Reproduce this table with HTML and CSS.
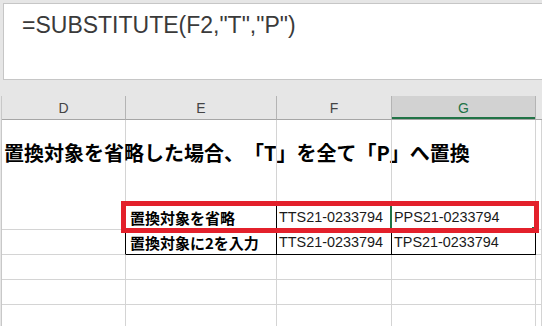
FILE: index.html
```html
<!DOCTYPE html>
<html lang="ja">
<head>
    <meta charset="UTF-8">
    <title>SUBSTITUTE</title>
    <link rel="stylesheet" href="styles.css">
</head>
<body>

    <div class="formula-bar">=SUBSTITUTE(F2,"T","P")</div>

    <div class="sheet">
        <div class="col-head">D</div>
        <div class="col-head">E</div>
        <div class="col-head">F</div>
        <div class="col-head active">G</div>
        <div class="col-head last"></div>

        <div class="cell title-row"><span class="title">置換対象を省略した場合、「T」を全て「P」へ置換</span></div>
        <div class="cell title-row"></div>
        <div class="cell title-row tb-top"></div>
        <div class="cell title-row tb-top"></div>
        <div class="cell title-row"></div>

        <div class="cell tb-left"></div>
        <div class="cell tb label">置換対象を省略</div>
        <div class="cell tb value">TTS21-0233794</div>
        <div class="cell tb value">PPS21-0233794</div>
        <div class="cell"></div>

        <div class="cell tb-left"></div>
        <div class="cell tb label">置換対象に2を入力</div>
        <div class="cell tb value">TTS21-0233794</div>
        <div class="cell tb value">TPS21-0233794</div>
        <div class="cell"></div>

        <div class="cell"></div>
        <div class="cell"></div>
        <div class="cell"></div>
        <div class="cell"></div>
        <div class="cell"></div>

        <div class="cell"></div>
        <div class="cell"></div>
        <div class="cell"></div>
        <div class="cell"></div>
        <div class="cell"></div>

        <div class="cell"></div>
        <div class="cell"></div>
        <div class="cell"></div>
        <div class="cell"></div>
        <div class="cell"></div>

        <!-- active cell G3 and the highlight frame -->
        <div class="selection"><span class="handle"></span></div>
        <div class="highlight"></div>
    </div>

</body>
</html>
```

FILE: styles.css
```css
body {
    margin: 0;
    background-color: #e6e6e6;
    font-family: "Liberation Sans", Arial, sans-serif;
    overflow: hidden;
}

.formula-bar {
    margin: 3px 0 0 3px;
    height: 77px;
    box-sizing: border-box;
    padding: 7px 0 0 18px;
    background-color: #fff;
    border: 1px solid #c6c6c6;
    border-right: none;
    font-size: 23px;
    line-height: 28px;
    color: #3a3a3a;
    white-space: nowrap;
}

.sheet {
    position: relative;
    margin: 16px 0 0 1px;
    display: grid;
    grid-template-columns: 124px 151px 115px 144px 1fr;
    grid-template-rows: 24px 85px 25px 25px 25px 25px 25px;
    border-left: 1px solid #c8c8c8;
    background-color: #fff;
}

.col-head {
    background-color: #e6e6e6;
    border-right: 1px solid #b4b4b4;
    border-bottom: 1px solid #a6a6a6;
    font-size: 14px;
    color: #444;
    display: flex;
    align-items: center;
    justify-content: center;
}

.col-head.active {
    background-color: #d2d2d2;
    color: #217346;
    box-shadow: inset 0 -2px 0 #217346;
}

.col-head.last {
    border-right: none;
}

.cell {
    border-right: 1px solid #d4d4d4;
    border-bottom: 1px solid #d4d4d4;
    min-width: 0;
}

.title-row {
    border-bottom: none;
}

.title {
    display: block;
    padding: 21px 0 0 2px;
    font-family: "Noto Sans CJK JP", sans-serif;
    font-size: 20px;
    font-weight: bold;
    line-height: 24px;
    color: #000;
    white-space: nowrap;
    text-spacing-trim: space-all;
}

.title-row.tb-top {
    box-shadow: inset 0 -1px 0 #000;
}

.tb-left {
    border-right-color: #000;
}

.tb {
    border-right-color: #000;
    border-bottom-color: #000;
    display: flex;
    align-items: center;
    white-space: nowrap;
    color: #000;
}

.label {
    padding-left: 4px;
    font-family: "Noto Sans CJK JP", sans-serif;
    font-size: 15px;
    font-weight: bold;
}

.value {
    padding-left: 2px;
    font-size: 14.4px;
    color: #1a1a1a;
}

.selection {
    position: absolute;
    left: 388px;
    top: 108px;
    width: 146px;
    height: 27px;
    box-sizing: border-box;
    border: 2px solid #217346;
}

.handle {
    position: absolute;
    right: -4px;
    bottom: -4px;
    width: 5px;
    height: 5px;
    background-color: #217346;
    border: 1px solid #fff;
}

.highlight {
    position: absolute;
    left: 119px;
    top: 105px;
    width: 418px;
    height: 32px;
    box-sizing: border-box;
    border: 5px solid #e3202b;
}
```
